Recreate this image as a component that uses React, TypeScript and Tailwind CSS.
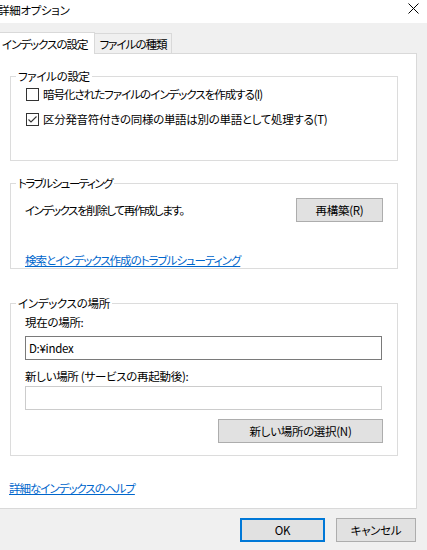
import React from "react";

function Checkbox({ checked }: { checked?: boolean }) {
  return (
    <span className="w-[13px] h-[13px] border border-[#333333] bg-white flex items-center justify-center shrink-0">
      {checked && (
        <svg width="11" height="11" viewBox="0 0 11 11">
          <polyline points="1.5,5.5 4,8 9.5,2.5" fill="none" stroke="#333333" strokeWidth="1.1" />
        </svg>
      )}
    </span>
  );
}

function Group({ title, className, titleClass, children }: { title: string; className: string; titleClass?: string; children: React.ReactNode }) {
  return (
    <div className={"relative ml-[10px] w-[388px] border border-[#dcdcdc] " + className}>
      <span className={"absolute left-[5px] top-[-9px] px-[2px] bg-white leading-[16px] whitespace-nowrap " + (titleClass ?? "")}>{title}</span>
      {children}
    </div>
  );
}

function Btn({ children, className }: { children: React.ReactNode; className: string }) {
  return (
    <div className={"h-[24px] flex items-center justify-center bg-[#e1e1e1] border border-[#adadad] whitespace-nowrap " + className}>
      {children}
    </div>
  );
}

export default function App() {
  return (
    <div className="w-[427px] h-[550px] bg-[#f0f0f0] overflow-hidden text-[11.5px] tracking-[-0.3px] text-black font-['Noto_Sans_CJK_JP',sans-serif] [font-feature-settings:'palt'] leading-[16px] whitespace-nowrap">
      {/* title bar */}
      <div className="h-[23px] bg-white flex justify-between">
        <span className="ml-[-2px] mt-[2px]">詳細オプション</span>
        <svg className="mr-[8px] mt-[3px]" width="11" height="11" viewBox="0 0 11 11">
          <line x1="0.5" y1="0.5" x2="10.5" y2="10.5" stroke="#000" strokeWidth="1" />
          <line x1="10.5" y1="0.5" x2="0.5" y2="10.5" stroke="#000" strokeWidth="1" />
        </svg>
      </div>
      {/* tabs */}
      <div className="h-[30px] flex items-end">
        <div className="relative z-10 -mb-px h-[22px] w-[95px] bg-white border-t border-r border-[#d9d9d9] flex items-center pl-[2px] tracking-[-1px]">
          インデックスの設定
        </div>
        <div className="h-[20px] w-[77px] bg-[#f0f0f0] border-t border-r border-[#d9d9d9] flex items-center justify-center tracking-[-1px]">
          ファイルの種類
        </div>
      </div>
      {/* panel */}
      <div className="w-[417px] h-[456px] bg-white border border-l-0 border-[#d9d9d9] flex flex-col">
        <Group title="ファイルの設定" className="mt-[22px] h-[85px]">
          <div className="pt-[9px] pl-[15px] flex flex-col gap-[9px]">
            <div className="h-[16px] flex items-center gap-[4px]">
              <Checkbox />
              <span className="tracking-[-1px]">暗号化されたファイルのインデックスを作成する(I)</span>
            </div>
            <div className="h-[16px] flex items-center gap-[4px]">
              <Checkbox checked />
              <span>区分発音符付きの同様の単語は別の単語として処理する(T)</span>
            </div>
          </div>
        </Group>
        <Group title="トラブルシューティング" titleClass="tracking-[-1.5px]" className="mt-[22px] h-[86px]">
          <div className="pt-[14px] pl-[14px] pr-[14px] flex items-center justify-between">
            <span className="tracking-[-1.4px]">インデックスを削除して再作成します。</span>
            <Btn className="w-[87px]">再構築(R)</Btn>
          </div>
          <div className="mt-[30px] pl-[14px]">
            <span className="text-[#0066cc] underline tracking-[-1px]">検索とインデックス作成のトラブルシューティング</span>
          </div>
        </Group>
        <Group title="インデックスの場所" className="mt-[34px] h-[153px]">
          <div className="pt-[10px] pl-[14px] pr-[14px] flex flex-col">
            <span>現在の場所:</span>
            <div className="mt-[6px] h-[24px] w-[357px] border border-[#7a7a7a] flex items-center pl-[3px]">D:¥index</div>
            <span className="mt-[8px]">新しい場所 (サービスの再起動後):</span>
            <div className="mt-[2px] h-[24px] w-[357px] border border-[#cccccc]" />
            <div className="mt-[9px] flex justify-end">
              <Btn className="w-[165px]">新しい場所の選択(N)</Btn>
            </div>
          </div>
        </Group>
        <div className="mt-[24px] pl-[9px]">
          <span className="text-[#0066cc] underline tracking-[-1px]">詳細なインデックスのヘルプ</span>
        </div>
      </div>
      {/* bottom buttons */}
      <div className="mt-[9px] flex justify-end gap-[11px] pr-[11px]">
        <div className="h-[24px] w-[85px] flex items-center justify-center bg-[#e1e1e1] border-2 border-[#0078d7]">OK</div>
        <Btn className="w-[80px]">キャンセル</Btn>
      </div>
    </div>
  );
}
